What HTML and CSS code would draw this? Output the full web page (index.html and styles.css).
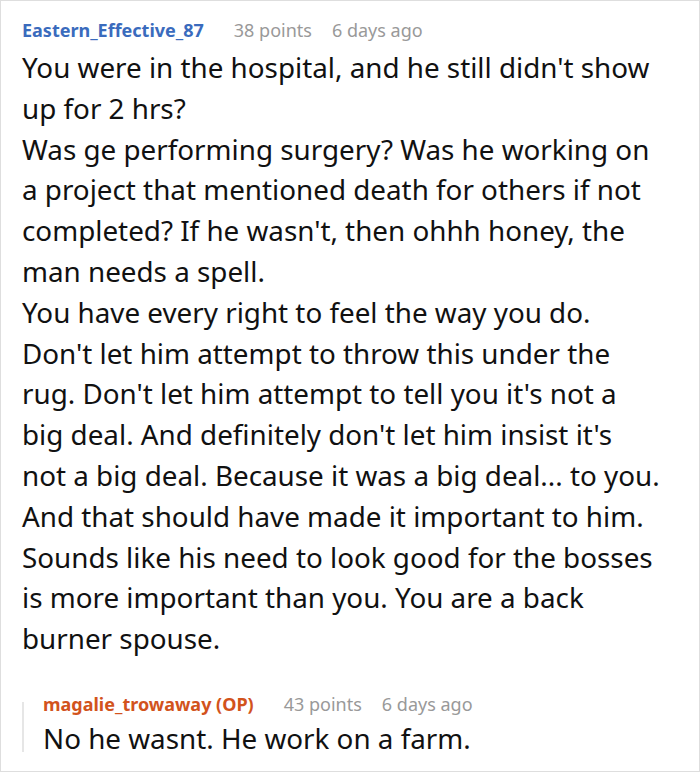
FILE: index.html
```html
<!DOCTYPE html>
<html>
<head>
<meta charset="utf-8">
<link rel="stylesheet" href="styles.css">
</head>
<body>
<div class="card">
  <div class="meta">
    <span class="author">Eastern_Effective_87</span>
    <span class="info">38 points</span>
    <span class="info">6 days ago</span>
  </div>
  <div class="text">
    <p>You were in the hospital, and he still didn't show up for 2 hrs?</p>
    <p>Was ge performing surgery? Was he working on a project that mentioned death for others if not completed? If he wasn't, then ohhh honey, the man needs a spell.</p>
    <p>You have every right to feel the way you do. Don't let him attempt to throw this under the rug. Don't let him attempt to tell you it's not a big deal. And definitely don't let him insist it's not a big deal. Because it was a big deal... to you. And that should have made it important to him. Sounds like his need to look good for the bosses is more important than you. You are a back burner spouse.</p>
  </div>
  <div class="reply">
    <div class="reply-line"></div>
    <div class="reply-body">
      <div class="meta">
        <span class="author op">magalie_trowaway (OP)</span>
        <span class="info">43 points</span>
        <span class="info">6 days ago</span>
      </div>
      <div class="text">
        <p>No he wasnt. He work on a farm.</p>
      </div>
    </div>
  </div>
</div>
</body>
</html>
```

FILE: styles.css
```css
html, body {
  margin: 0;
  padding: 0;
  background: #fff;
}
.card {
  box-sizing: border-box;
  width: 700px;
  height: 772px;
  border: 1px solid #dedede;
  padding: 17px 39px 0 21px;
  font-family: "Noto Sans", "Open Sans", sans-serif;
  color: #111;
  overflow: hidden;
}
.meta {
  display: flex;
  gap: 20px;
  font-size: 18px;
  line-height: 24px;
}
.author {
  font-weight: 700;
  color: #3a6bbd;
  margin-right: 10px;
}
.author.op {
  color: #d2531c;
}
.info {
  color: #999;
}
.text {
  margin-top: 5px;
  font-size: 27.8px;
  line-height: 40.8px;
}
.text p {
  margin: 0;
}
.reply {
  display: flex;
  gap: 19px;
  margin-top: 33px;
}
.reply-line {
  flex: none;
  width: 2px;
  height: 50px;
  margin-top: 10px;
  background: #e6e6e6;
}
.reply .text {
  margin-top: 2px;
}
```
